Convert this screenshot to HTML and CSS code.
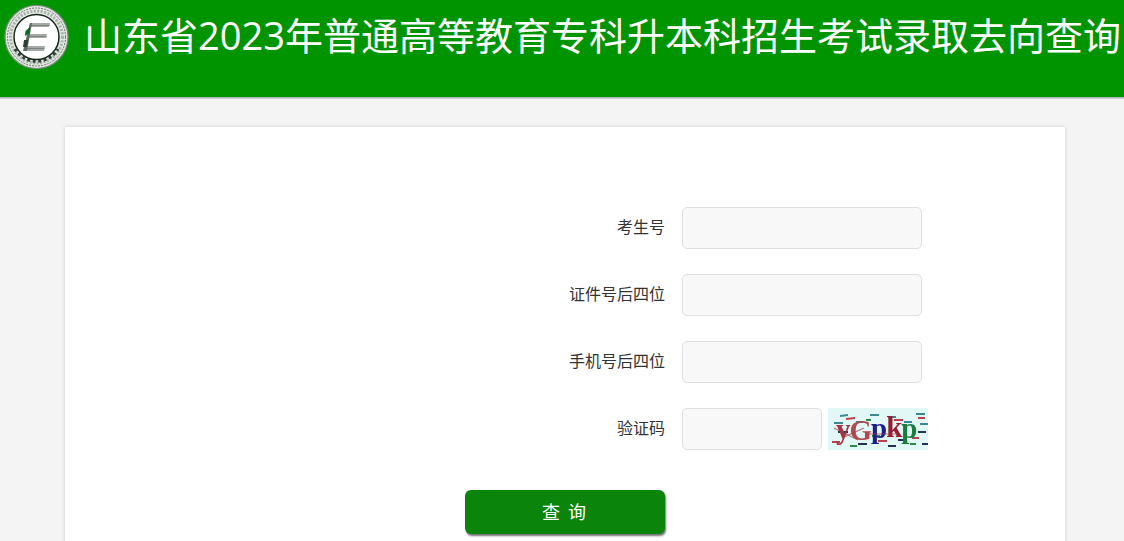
FILE: index.html
```html
<!DOCTYPE html>
<html lang="zh-CN">
<head>
<meta charset="utf-8">
<title>山东省2023年普通高等教育专科升本科招生考试录取去向查询</title>
<link rel="stylesheet" href="styles.css">
</head>
<body>
<header class="header">
  <svg class="logo" width="66" height="66" viewBox="0 0 66 66">
    <circle cx="33.5" cy="33" r="31.5" fill="#e4e8e4" stroke="#7f8c7f" stroke-width="1.2"/>
    <circle cx="33.5" cy="33" r="29" fill="none" stroke="#6a7a6a" stroke-width="1" stroke-dasharray="2 1"/>
    <circle cx="33.5" cy="33" r="26" fill="none" stroke="#a8b2a8" stroke-width="3" stroke-dasharray="2 1.5"/>
    <path d="M12 45A25 25 0 0 0 55 45" fill="none" stroke="#33443a" stroke-width="3" stroke-dasharray="3 2.500"/>
    <circle cx="33.5" cy="33" r="22.5" fill="#fff" stroke="#16281a" stroke-width="1.5"/>
    <path d="M27 19H47L46 23H26Z" fill="#a6aaa6"/>
    <path d="M27 21H46.500V22H26.700Z" fill="#7d837d"/>
    <path d="M25 30H44L43 34H24Z" fill="#a6aaa6"/>
    <path d="M25 32H43.500V33H24.700Z" fill="#7d837d"/>
    <path d="M22 42H42L41 47H21Z" fill="#a6aaa6"/>
    <path d="M22 44H41.500V45H21.700Z" fill="#7d837d"/>
    <path d="M27 19H29L24 47H20Z" fill="#5c6a62"/>
    <path d="M22.500 27L27 23V29L22 32Z" fill="#0c6a1e"/>
    <path d="M21 36H25L24 43H20Z" fill="#2e3e36"/>
  </svg>
  <h1 class="title">山东省2023年普通高等教育专科升本科招生考试录取去向查询</h1>
</header>
<main class="card">
  <form class="form">
    <label class="label" for="ksh">考生号</label>
    <input class="input" id="ksh" type="text">
    <label class="label" for="zjh">证件号后四位</label>
    <input class="input" id="zjh" type="text">
    <label class="label" for="sjh">手机号后四位</label>
    <input class="input" id="sjh" type="text">
    <label class="label" for="yzm">验证码</label>
    <div class="captcha-row">
      <input class="input input-short" id="yzm" type="text">
      <svg class="captcha" width="100" height="42" viewBox="0 0 100 42">
        <rect width="100" height="42" fill="#e2f8f7"/>
        <g stroke-width="1.8" fill="none">
          <path d="M12 8l8-1M42 7h9M60 9h8M88 6h9M6 15h9M28 14h7M76 14h8M92 16h8" stroke="#3b8a8f"/>
          <path d="M18 11l9-1M66 12h9M90 10h7M4 34h8M50 33h9M84 30h7" stroke="#b8434f"/>
          <path d="M10 24h10M70 32h8M90 24h8M30 36h9M60 38h8M94 36h6" stroke="#23304f"/>
          <path d="M22 38h7M44 28h8M82 36h6M38 12h5" stroke="#2f8a4a"/>
        </g>
        <text class="cap" x="8" y="31"><tspan class="cap-y">y</tspan><tspan class="cap-g" dx="-1" dy="1">G</tspan><tspan class="cap-p" dx="-1" dy="-2">p</tspan><tspan class="cap-k" dx="-1" dy="-1">k</tspan><tspan class="cap-q" dx="-1" dy="1">p</tspan></text>
        <path d="M6 20L30 32M14 30L36 20M40 26h30" stroke="#9c3a45" stroke-width="1.200" fill="none" opacity=".7"/>
      </svg>
    </div>
    <div class="actions">
      <button class="button" type="button">查 询</button>
    </div>
  </form>
</main>
</body>
</html>
```

FILE: styles.css
```css
html, body {
  margin: 0;
  height: 541px;
  overflow: hidden;
}
body {
  background: #f4f4f4;
  font-family: "Noto Sans CJK SC", "Noto Sans", sans-serif;
}
.header {
  display: flex;
  align-items: flex-start;
  height: 97px;
  background: #009400;
  border-bottom: 1px solid #b0b0b0;
  box-shadow: 0 1px 0 #cfcfcf;
  white-space: nowrap;
  overflow: hidden;
}
.logo {
  flex: none;
  margin: 4px 0 0 3px;
}
.title {
  margin: 7px 0 0 15px;
  font-family: "Open Sans", "Noto Sans CJK SC", sans-serif;
  font-size: 38px;
  line-height: 56px;
  font-weight: 400;
  color: #fff;
}
.card {
  width: 1000px;
  height: 500px;
  margin: 29px 0 0 65px;
  background: #fff;
  box-shadow: 0 0 4px rgba(0, 0, 0, .16);
  box-sizing: border-box;
  padding-top: 80px;
}
.form {
  display: grid;
  grid-template-columns: 600px 1fr;
  column-gap: 17px;
  row-gap: 25px;
  align-items: center;
}
.label {
  text-align: right;
  font-size: 16px;
  line-height: 24px;
  padding-bottom: 5px;
  color: #333;
}
.input {
  width: 240px;
  height: 42px;
  box-sizing: border-box;
  background: #f8f8f8;
  border: 1px solid #e0e0e0;
  border-radius: 5px;
  padding: 0 10px;
  outline: none;
}
.input-short {
  width: 140px;
}
.captcha-row {
  display: flex;
  gap: 6px;
  align-items: center;
}
.captcha {
  display: block;
  filter: blur(.4px);
}
.cap {
  font-family: "Liberation Serif", serif;
  font-size: 29px;
  font-weight: 700;
}
.cap-y { fill: #a8323f; }
.cap-g { fill: #b04a50; }
.cap-p { fill: #1a1f8c; }
.cap-k { fill: #9c1a30; }
.cap-q { fill: #16803a; }
.actions {
  grid-column: 1;
  display: flex;
  justify-content: flex-end;
  margin-top: 15px;
}
.button {
  width: 200px;
  height: 44px;
  padding: 0 0 3px;
  background: #0a840a;
  color: #fff;
  border: none;
  border-radius: 6px;
  box-shadow: 1px 2px 2px rgba(0, 0, 0, .55);
  font-family: inherit;
  font-size: 18px;
  letter-spacing: 2px;
}
```
